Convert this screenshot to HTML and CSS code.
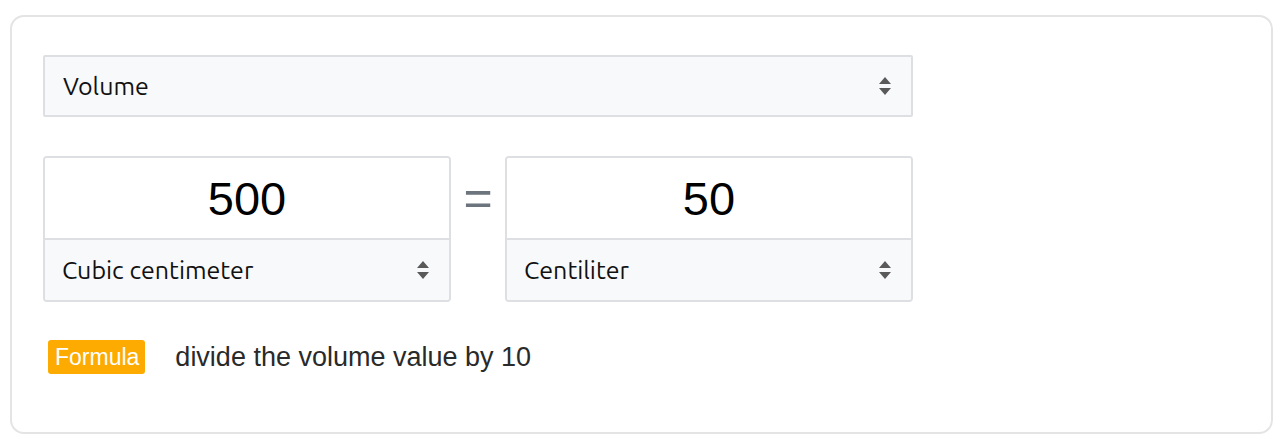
FILE: index.html
```html
<html>
<head>
<meta charset="utf-8">
<title>Volume converter</title>
<link rel="stylesheet" href="styles.css">
</head>
<body>
	<div class="card">

		<div class="picker picker-wide">
			<span>Volume</span>
			<svg class="caret" width="14" height="22" viewBox="0 0 14 22"><path d="M1 9 L7 2 L13 9 Z M1 13 L7 20 L13 13 Z"/></svg>
		</div>

		<div class="convert-row">
			<div class="unit-box">
				<input class="amount" type="text" value="500">
				<div class="picker">
					<span>Cubic centimeter</span>
					<svg class="caret" width="14" height="22" viewBox="0 0 14 22"><path d="M1 9 L7 2 L13 9 Z M1 13 L7 20 L13 13 Z"/></svg>
				</div>
			</div>

			<div class="equals">=</div>

			<div class="unit-box">
				<input class="amount" type="text" value="50">
				<div class="picker">
					<span>Centiliter</span>
					<svg class="caret" width="14" height="22" viewBox="0 0 14 22"><path d="M1 9 L7 2 L13 9 Z M1 13 L7 20 L13 13 Z"/></svg>
				</div>
			</div>
		</div>

		<div class="formula">
			<span class="badge">Formula</span>
			<span class="formula-text">divide the volume value by 10</span>
		</div>

	</div>
</body>
</html>
```

FILE: styles.css
```css
html,body{
	margin: 0px;
	padding: 0px;
	background-color: #FFF;
}

body{
	padding: 15px 7px 0px 10px;
	font-family: "Liberation Sans", Arial, sans-serif;
	color: #222;
}

.card{
	box-sizing: border-box;
	height: 419px;
	padding: 38px 31px 0px 31px;
	border: 2px solid #E4E4E4;
	border-radius: 14px;
}

.picker{
	box-sizing: border-box;
	display: flex;
	align-items: center;
	justify-content: space-between;
	height: 60px;
	padding: 0px 19px 0px 18px;
	background-color: #F8F9FA;
	font-family: "Ubuntu", "Open Sans", sans-serif;
	font-size: 25px;
	color: #111;
}

.picker-wide{
	width: 870px;
	height: 62px;
	border: 2px solid #DDDFE2;
	border-radius: 2px;
}

.caret{
	fill: #5A5A5A;
}

.convert-row{
	display: flex;
	width: 870px;
	margin-top: 39px;
}

.unit-box{
	box-sizing: border-box;
	width: 408px;
	border: 2px solid #DDDFE2;
	border-radius: 4px;
	overflow: hidden;
}

.amount{
	display: block;
	box-sizing: border-box;
	width: 100%;
	height: 82px;
	margin: 0px;
	padding: 0px;
	border: none;
	border-bottom: 2px solid #DDDFE2;
	outline: none;
	background-color: #FFF;
	text-align: center;
	font-family: "Liberation Sans", Arial, sans-serif;
	font-size: 47px;
	color: #000;
}

.unit-box .picker{
	height: 60px;
	padding-left: 17px;
}

.equals{
	flex: 1;
	height: 84px;
	line-height: 84px;
	text-align: center;
	font-size: 50px;
	color: #6C757D;
}

.formula{
	display: flex;
	align-items: center;
	margin-top: 38px;
	padding-left: 5px;
}

.badge{
	display: inline-block;
	height: 34px;
	line-height: 34px;
	padding: 0px 6px 0px 7px;
	border-radius: 3px;
	background-color: #FDAB00;
	color: #FFF;
	font-size: 23px;
}

.formula-text{
	margin-left: 30px;
	font-size: 27px;
	color: #2A2A2A;
}
```
